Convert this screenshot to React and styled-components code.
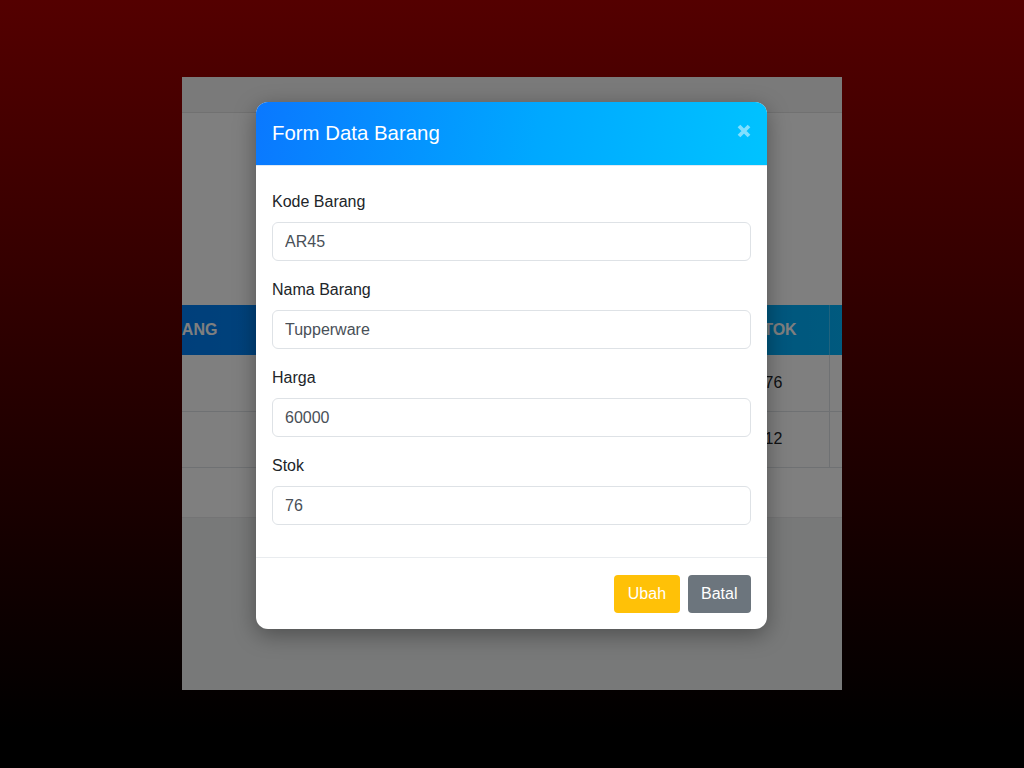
import styled, { createGlobalStyle } from "styled-components";

const GlobalStyle = createGlobalStyle`
    html, body {
        margin: 0;
        min-height: 100%;
    }
    body {
        min-height: 768px;
        font-family: "Liberation Sans", Arial, sans-serif;
        background: linear-gradient(to bottom, #540000 0px, #2a0000 360px, #0c0000 620px, #000000 730px, #000000 768px);
    }
`;

const Stage = styled.div`
    display: flex;
    justify-content: center;
    padding-top: 77px;
    min-height: 691px;
`;

const Screen = styled.div`
    position: relative;
    width: 660px;
    height: 613px;
    overflow: hidden;
    background: #f1f2f3;
`;

const Navbar = styled.div`
    height: 35px;
    background: #f4f4f4;
    border-bottom: 1px solid #e3e3e3;
`;

const Card = styled.div`
    background: #ffffff;
    padding-bottom: 49px;
    border-bottom: 1px solid #e8e9ea;
`;

const CardTop = styled.div`
    height: 192px;
    display: flex;
    align-items: center;
    justify-content: center;
`;

const Heading = styled.h3`
    margin: 0;
    font-size: 24px;
    font-weight: 600;
    color: #212529;
`;

const TableWrap = styled.div`
    margin-left: -158px;
`;

const Table = styled.table`
    border-collapse: collapse;
    table-layout: fixed;
    width: 957px;
    font-size: 16px;
    color: #212529;
`;

const HeadRow = styled.tr`
    background: linear-gradient(to right, #0072f5, #00bfff);
`;

const Th = styled.th`
    height: 50px;
    padding: 0 12px;
    text-align: left;
    font-weight: 700;
    color: #ffffff;
    border-right: 1px solid rgba(255, 255, 255, 0.25);
    box-sizing: border-box;
    white-space: nowrap;
`;

const Td = styled.td`
    height: 56px;
    padding: 0 24px;
    border-right: 1px solid #dee2e6;
    border-bottom: 1px solid #dee2e6;
    box-sizing: border-box;
    white-space: nowrap;
`;

const Overlay = styled.div`
    position: absolute;
    inset: 0;
    background: rgba(0, 0, 0, 0.5);
`;

const Modal = styled.div`
    position: absolute;
    top: 25px;
    left: 74px;
    width: 511px;
    background: #ffffff;
    border-radius: 12px;
    overflow: hidden;
    box-shadow: 0 6px 22px rgba(0, 0, 0, 0.35);
`;

const ModalHeader = styled.div`
    display: flex;
    align-items: center;
    justify-content: space-between;
    padding: 16px 16px 17px;
    background: linear-gradient(100deg, #0a78ff 0%, #00a8ff 55%, #00c3ff 100%);
    border-bottom: 1px solid #dfe9f3;
`;

const Title = styled.h5`
    margin: 0;
    font-size: 20.4px;
    font-weight: 400;
    line-height: 30px;
    color: #ffffff;
`;

const Close = styled.span`
    display: flex;
    margin-top: -5px;
    color: rgba(255, 255, 255, 0.5);
`;

const ModalBody = styled.div`
    padding: 24px 16px 15px;
`;

const FormGroup = styled.div`
    margin-bottom: 17px;
`;

const Label = styled.label`
    display: block;
    font-size: 16px;
    line-height: 24px;
    margin-bottom: 8px;
    color: #212529;
`;

const Input = styled.input`
    display: block;
    width: 100%;
    height: 39px;
    box-sizing: border-box;
    padding: 0 12px;
    border: 1px solid #dee2e6;
    border-radius: 6px;
    font-family: inherit;
    font-size: 16px;
    color: #495057;
    background: #ffffff;
    outline: none;
`;

const ModalFooter = styled.div`
    display: flex;
    justify-content: flex-end;
    gap: 8px;
    padding: 17px 16px 16px;
    border-top: 1px solid #e9ecef;
`;

const Button = styled.button`
    height: 38px;
    padding: 0 13.5px;
    border: none;
    border-radius: 4px;
    font-family: inherit;
    font-size: 16px;
    color: #ffffff;
    background: ${props => (props.variant === "warning" ? "#ffc107" : "#6c757d")};
`;

const CloseIcon = () => (
    <svg width="14" height="14" viewBox="0 0 14 14">
        <path d="M2 2 L12 12 M12 2 L2 12" stroke="currentColor" strokeWidth="3.8" strokeLinecap="butt" fill="none" />
    </svg>
);

export default function App() {
    const fields = [
        { label: "Kode Barang", value: "AR45" },
        { label: "Nama Barang", value: "Tupperware" },
        { label: "Harga", value: "60000" },
        { label: "Stok", value: "76" },
    ];

    const rows = [
        { no: 1, kode: "AR45", nama: "Tupperware", harga: "60000", stok: "76" },
        { no: 2, kode: "BK12", nama: "Botol", harga: "25000", stok: "12" },
    ];

    return (
        <>
            <GlobalStyle />
            <Stage>
                <Screen>
                    <Navbar />
                    <Card>
                        <CardTop>
                            <Heading>Data Barang</Heading>
                        </CardTop>
                        <TableWrap>
                            <Table>
                                <colgroup>
                                    <col style={{ width: 60 }} />
                                    <col style={{ width: 200 }} />
                                    <col style={{ width: 230 }} />
                                    <col style={{ width: 226 }} />
                                    <col style={{ width: 89 }} />
                                    <col style={{ width: 152 }} />
                                </colgroup>
                                <thead>
                                    <HeadRow>
                                        <Th>NO</Th>
                                        <Th>KODE BARANG</Th>
                                        <Th>NAMA BARANG</Th>
                                        <Th>HARGA</Th>
                                        <Th>STOK</Th>
                                        <Th>AKSI</Th>
                                    </HeadRow>
                                </thead>
                                <tbody>
                                    {rows.map(row => (
                                        <tr key={row.no}>
                                            <Td>{row.no}</Td>
                                            <Td>{row.kode}</Td>
                                            <Td>{row.nama}</Td>
                                            <Td>{row.harga}</Td>
                                            <Td>{row.stok}</Td>
                                            <Td></Td>
                                        </tr>
                                    ))}
                                </tbody>
                            </Table>
                        </TableWrap>
                    </Card>
                    <Overlay />
                    <Modal>
                        <ModalHeader>
                            <Title>Form Data Barang</Title>
                            <Close>
                                <CloseIcon />
                            </Close>
                        </ModalHeader>
                        <ModalBody>
                            {fields.map(field => (
                                <FormGroup key={field.label}>
                                    <Label>{field.label}</Label>
                                    <Input defaultValue={field.value} />
                                </FormGroup>
                            ))}
                        </ModalBody>
                        <ModalFooter>
                            <Button variant="warning">Ubah</Button>
                            <Button variant="secondary">Batal</Button>
                        </ModalFooter>
                    </Modal>
                </Screen>
            </Stage>
        </>
    );
}
